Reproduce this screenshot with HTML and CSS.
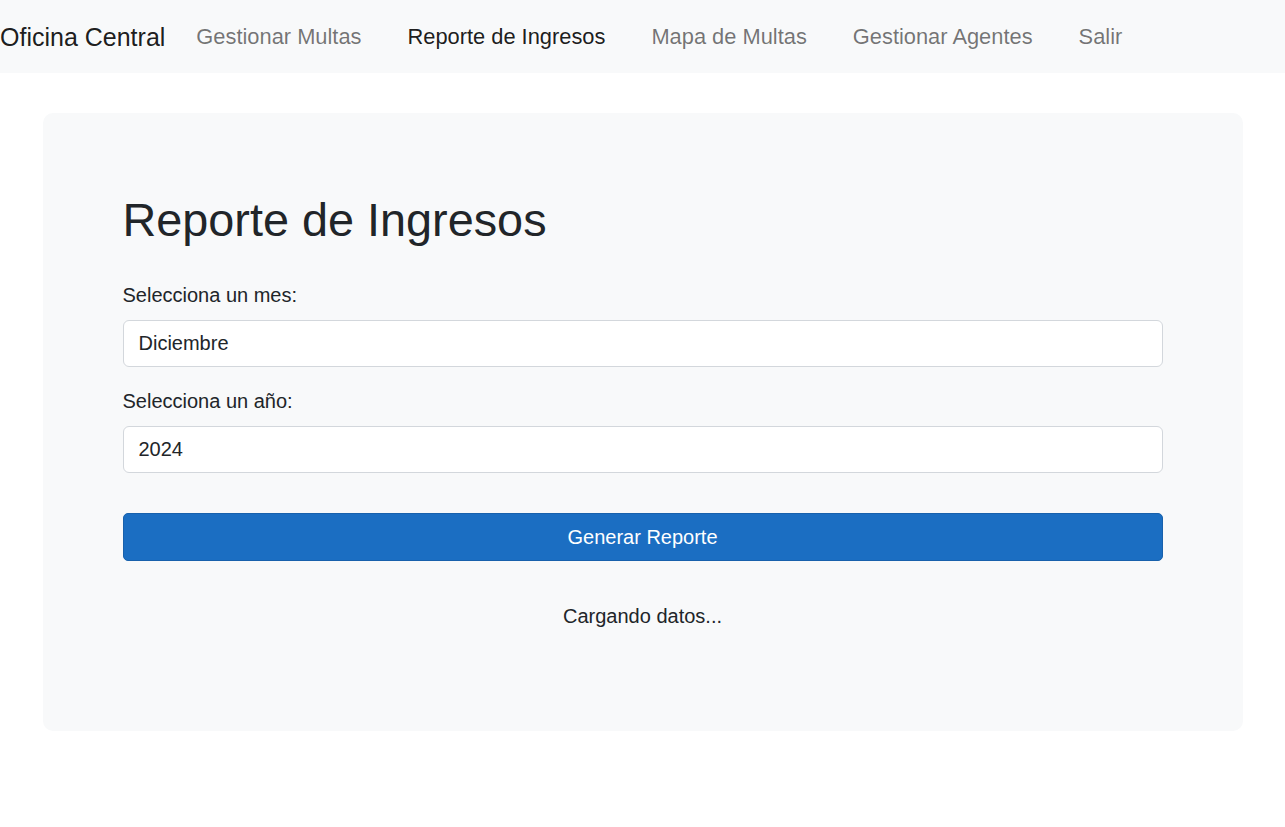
FILE: index.html
```html
<!DOCTYPE html>
<html lang="es">
<head>
<meta charset="utf-8">
<title>Reporte de Ingresos</title>
<link rel="stylesheet" href="styles.css">
</head>
<body>
<nav class="navbar">
  <a class="brand" href="#">Oficina Central</a>
  <ul class="nav-links">
    <li><a class="nav-link" href="#">Gestionar Multas</a></li>
    <li><a class="nav-link active" href="#">Reporte de Ingresos</a></li>
    <li><a class="nav-link" href="#">Mapa de Multas</a></li>
    <li><a class="nav-link" href="#">Gestionar Agentes</a></li>
    <li><a class="nav-link" href="#">Salir</a></li>
  </ul>
</nav>
<main class="container">
  <section class="card">
    <h1 class="title">Reporte de Ingresos</h1>
    <div class="field">
      <label class="field-label" for="mes">Selecciona un mes:</label>
      <select id="mes" class="control">
        <option>Diciembre</option>
      </select>
    </div>
    <div class="field">
      <label class="field-label" for="anio">Selecciona un año:</label>
      <input id="anio" class="control" type="text" value="2024">
    </div>
    <button class="btn-primary" type="button">Generar Reporte</button>
    <p class="status">Cargando datos...</p>
  </section>
</main>
</body>
</html>
```

FILE: styles.css
```css
* { box-sizing: border-box; }

html, body {
  margin: 0;
  padding: 0;
  background: #ffffff;
}

body {
  font-family: "Liberation Sans", Arial, sans-serif;
  font-size: 20px;
  line-height: 1.5;
  color: #212529;
}

.navbar {
  display: flex;
  align-items: center;
  height: 73px;
  background: #f8f9fa;
  padding: 2px 0 0;
}

.brand {
  font-size: 25px;
  line-height: 1.5;
  color: rgba(0, 0, 0, 0.9);
  text-decoration: none;
  margin-right: 8px;
  white-space: nowrap;
}

.nav-links {
  display: flex;
  align-items: center;
  list-style: none;
  margin: 0;
  padding: 0;
}

.nav-link {
  display: block;
  font-size: 21.85px;
  line-height: 1.5;
  padding: 0 23px;
  color: rgba(0, 0, 0, 0.55);
  text-decoration: none;
  white-space: nowrap;
}

.nav-link.active {
  color: rgba(0, 0, 0, 0.9);
}

.container {
  width: 1200px;
  margin: 40px auto 0;
}

.card {
  background: #f8f9fa;
  border-radius: 10px;
  padding: 79px 80px 80px;
}

.title {
  font-size: 46.8px;
  font-weight: 400;
  line-height: 1.2;
  margin: 0 0 32px;
}

.field {
  margin-bottom: 19px;
}

.field-label {
  display: block;
  margin-bottom: 9.5px;
}

.control {
  display: block;
  width: 100%;
  height: 47.5px;
  padding: 7.5px 15px;
  font-family: inherit;
  font-size: 20px;
  line-height: 1.5;
  color: #212529;
  background: #ffffff;
  border: 1px solid #d3d7dc;
  border-radius: 6px;
  appearance: none;
  -webkit-appearance: none;
  outline: none;
}

.btn-primary {
  display: block;
  width: 100%;
  height: 47.5px;
  margin-top: 40px;
  padding: 7.5px 15px;
  font-family: inherit;
  font-size: 20px;
  line-height: 1.5;
  color: #ffffff;
  background: #1b6ec2;
  border: 1px solid #1861ac;
  border-radius: 5px;
  cursor: pointer;
}

.status {
  text-align: center;
  margin: 40px 0 20px;
}
```
